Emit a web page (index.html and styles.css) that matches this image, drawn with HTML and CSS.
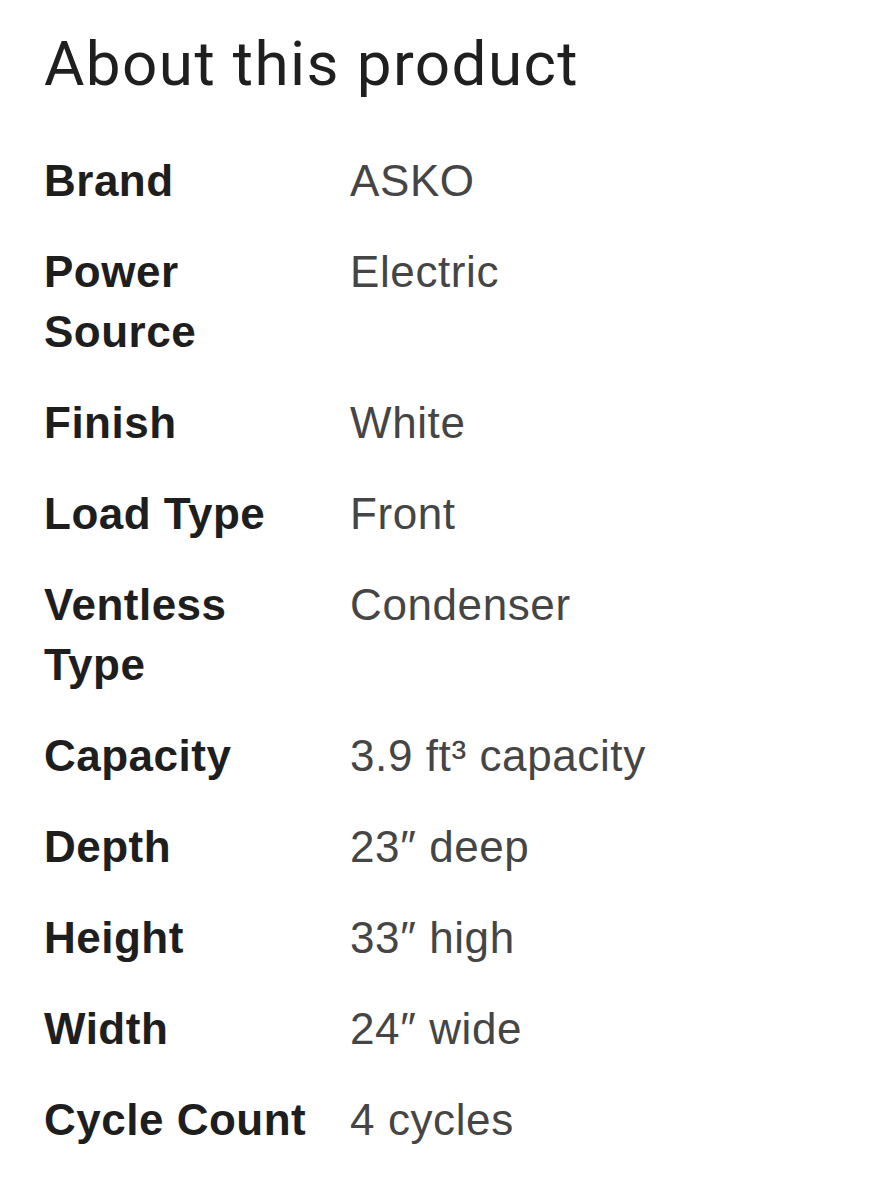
FILE: index.html
```html
<!DOCTYPE html>
<html lang="en">
<head>
<meta charset="utf-8">
<title>About this product</title>
<link rel="stylesheet" href="styles.css">
</head>
<body>
<main class="product">
  <h1 class="title">About this product</h1>
  <dl class="specs">
    <div class="row"><dt class="label">Brand</dt><dd class="value">ASKO</dd></div>
    <div class="row"><dt class="label">Power Source</dt><dd class="value">Electric</dd></div>
    <div class="row"><dt class="label">Finish</dt><dd class="value">White</dd></div>
    <div class="row"><dt class="label">Load Type</dt><dd class="value">Front</dd></div>
    <div class="row"><dt class="label">Ventless Type</dt><dd class="value">Condenser</dd></div>
    <div class="row"><dt class="label">Capacity</dt><dd class="value">3.9 ft³ capacity</dd></div>
    <div class="row"><dt class="label">Depth</dt><dd class="value">23″ deep</dd></div>
    <div class="row"><dt class="label">Height</dt><dd class="value">33″ high</dd></div>
    <div class="row"><dt class="label">Width</dt><dd class="value">24″ wide</dd></div>
    <div class="row"><dt class="label">Cycle Count</dt><dd class="value">4 cycles</dd></div>
  </dl>
</main>
</body>
</html>
```
FILE: styles.css
```css
html, body {
  margin: 0;
  padding: 0;
  background: #ffffff;
}

.product {
  padding: 28px 44px 0 44px;
}

.title {
  margin: 0;
  font-family: Roboto, "Open Sans", sans-serif;
  font-weight: 400;
  font-size: 62px;
  line-height: 72px;
  color: #1f1f1f;
  letter-spacing: 1.4px;
}

.specs {
  margin: 51px 0 0 0;
  padding: 0;
  display: flex;
  flex-direction: column;
  gap: 31px;
  font-family: "Liberation Sans", Arial, sans-serif;
  font-size: 44px;
  line-height: 60px;
}

.row {
  display: grid;
  grid-template-columns: 280px 1fr;
  column-gap: 26px;
}

.label {
  margin: 0;
  font-weight: 700;
  color: #1e1e1e;
  letter-spacing: 0.5px;
}

.value {
  margin: 0;
  font-weight: 400;
  color: #454545;
  letter-spacing: 0.6px;
}
```
